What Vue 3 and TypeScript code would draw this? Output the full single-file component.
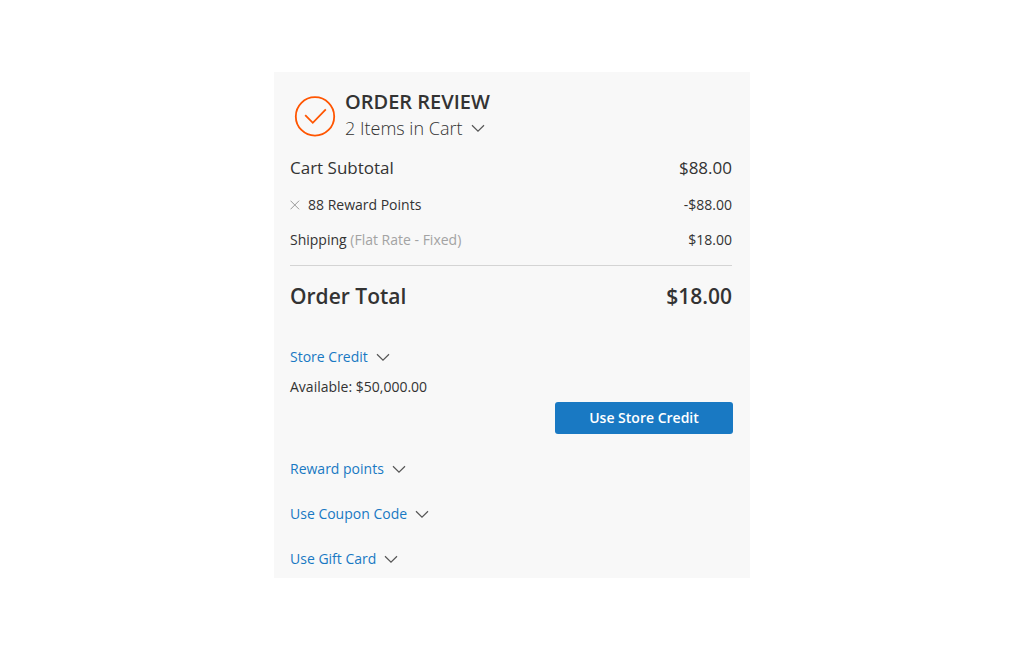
<script setup lang="ts">
import { ref } from 'vue'

interface Row {
  label: string
  note?: string
  amount: string
  kind: 'large' | 'normal'
  removable?: boolean
}

const rows: Row[] = [
  { label: 'Cart Subtotal', amount: '$88.00', kind: 'large' },
  { label: '88 Reward Points', amount: '-$88.00', kind: 'normal', removable: true },
  { label: 'Shipping', note: '(Flat Rate - Fixed)', amount: '$18.00', kind: 'normal' },
]

const links: string[] = ['Reward points', 'Use Coupon Code', 'Use Gift Card']
const creditOpen = ref(true)
</script>

<template>
  <main class="page">
    <section class="card">
      <header class="head">
        <svg class="check" viewBox="0 0 42 42" aria-hidden="true">
          <circle cx="21" cy="21.4" r="19.2" />
          <path d="M11.2 20.2 18.8 27.8 31.8 14.4" />
        </svg>
        <div>
          <h1 class="title">ORDER REVIEW</h1>
          <button class="items" type="button">
            2 Items in Cart
            <svg class="chevron" viewBox="0 0 14 8" aria-hidden="true"><path d="M1 1.3 7 7.1 13 1.3" /></svg>
          </button>
        </div>
      </header>

      <dl class="totals">
        <div v-for="row in rows" :key="row.label" class="row" :class="row.kind">
          <dt class="label">
            <button v-if="row.removable" class="remove" type="button" aria-label="Remove reward points">
              <svg viewBox="0 0 10 10" aria-hidden="true"><path d="M.5.7 9.1 9.3M9.1.7.5 9.3" /></svg>
            </button>
            <span>{{ row.label }} <span v-if="row.note" class="note">{{ row.note }}</span></span>
          </dt>
          <dd>{{ row.amount }}</dd>
        </div>
        <div class="row total">
          <dt>Order Total</dt>
          <dd>$18.00</dd>
        </div>
      </dl>

      <div class="credit">
        <button class="toggle" type="button" :aria-expanded="creditOpen" @click="creditOpen = !creditOpen">
          Store Credit
          <svg class="chevron" viewBox="0 0 14 8" aria-hidden="true"><path d="M1 1.3 7 7.1 13 1.3" /></svg>
        </button>
        <template v-if="creditOpen">
          <p class="available">Available: $50,000.00</p>
          <button class="primary" type="button">Use Store Credit</button>
        </template>
      </div>

      <div class="options">
        <button v-for="link in links" :key="link" class="toggle" type="button">
          {{ link }}
          <svg class="chevron" viewBox="0 0 14 8" aria-hidden="true"><path d="M1 1.3 7 7.1 13 1.3" /></svg>
        </button>
      </div>
    </section>
  </main>
</template>

<style>
body {
  margin: 0;
  background: #fff;
}
</style>

<style scoped>
.page {
  min-height: 100vh;
  box-sizing: border-box;
  display: flex;
  align-items: center;
  justify-content: center;
  font: 14px/20px "Open Sans", sans-serif;
  color: #333;
}
.card {
  width: 100%;
  max-width: 476px;
  box-sizing: border-box;
  padding: 17px 18px 9px 16px;
  background: #f8f8f8;
}
button {
  margin: 0;
  padding: 0;
  border: 0;
  background: none;
  font: inherit;
  color: inherit;
  cursor: pointer;
}
.head {
  display: flex;
  align-items: center;
  gap: 9px;
  padding-left: 4px;
}
.check {
  width: 42px;
  height: 42px;
  margin-top: 2px;
  fill: none;
  stroke: #ff5501;
  stroke-width: 1.8;
}
.title {
  margin: 0;
  font-size: 20px;
  line-height: 26px;
  font-weight: 600;
}
.items {
  display: flex;
  align-items: center;
  gap: 9px;
  font-size: 18px;
  line-height: 26px;
  font-weight: 300;
}
.chevron {
  width: 14px;
  height: 8px;
  fill: none;
  stroke: #555;
  stroke-width: 1.2;
}
.totals {
  margin: 13px 0 0;
}
.row {
  display: flex;
  justify-content: space-between;
  margin-bottom: 15px;
}
.row dd {
  margin: 0;
}
.large {
  font-size: 17px;
  line-height: 28px;
  margin-bottom: 13px;
}
.label {
  display: flex;
  align-items: center;
  gap: 8px;
}
.remove {
  display: flex;
}
.remove svg {
  width: 10px;
  height: 10px;
  fill: none;
  stroke: #999;
  stroke-width: 1;
}
.note {
  color: #a3a3a3;
}
.total {
  margin: 0;
  padding-top: 15px;
  border-top: 1px solid #d4d4d4;
  font-size: 21px;
  line-height: 30px;
  font-weight: 600;
}
.credit {
  display: flex;
  flex-direction: column;
  align-items: flex-start;
  margin-top: 36px;
}
.toggle {
  display: flex;
  align-items: center;
  gap: 8px;
  color: #1979c3;
}
.available {
  margin: 10px 0 5px;
}
.primary {
  align-self: flex-end;
  width: 178px;
  height: 32px;
  margin-right: -1px;
  border-radius: 3px;
  background: #1979c3;
  color: #fff;
  font-weight: 600;
}
.options {
  display: flex;
  flex-direction: column;
  align-items: flex-start;
  gap: 25px;
  margin-top: 25px;
}
</style>
